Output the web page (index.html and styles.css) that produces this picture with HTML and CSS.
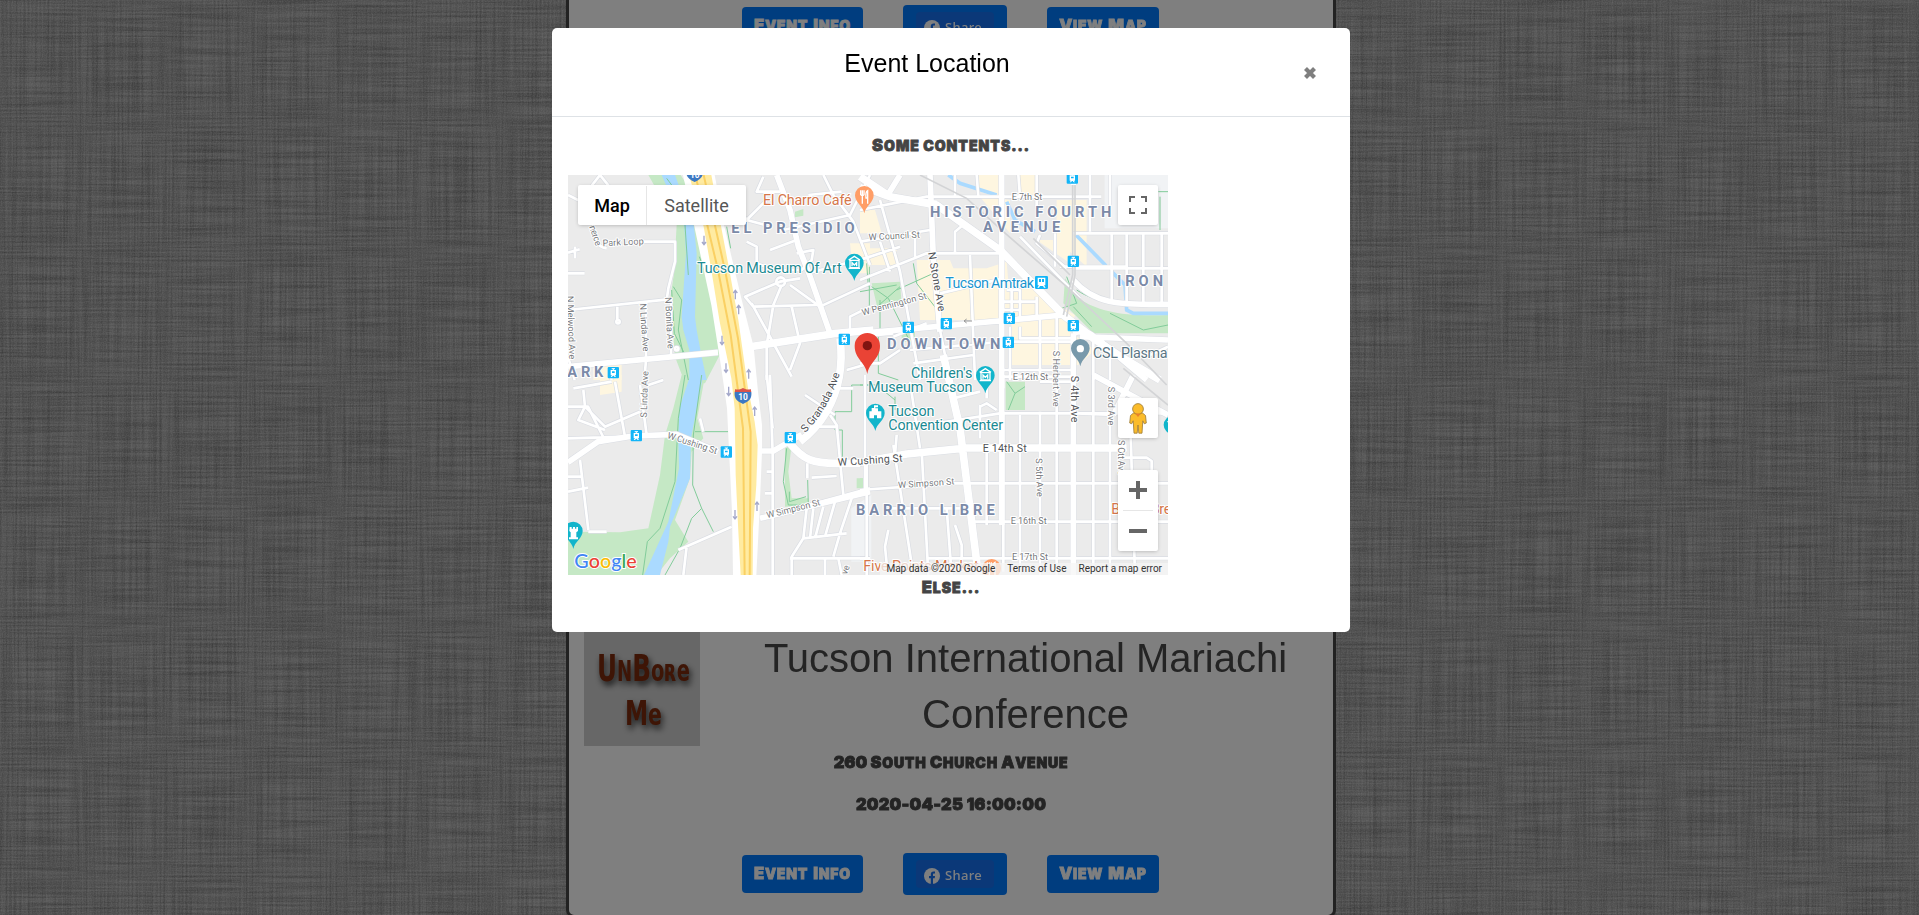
FILE: index.html
```html
<!DOCTYPE html>
<html lang="en">
<head>
<meta charset="utf-8">
<title>Event Location</title>
<link rel="stylesheet" href="styles.css">
</head>
<body>
<svg class="linen" aria-hidden="true">
  <defs>
    <filter id="weft" x="0" y="0" width="100%" height="100%"><feTurbulence type="fractalNoise" baseFrequency="0.012 0.5" numOctaves="2" seed="4"/><feColorMatrix values="0 0 0 0 0  0 0 0 0 0  0 0 0 0 0  .42 0 0 0 -.12"/></filter>
    <filter id="warp" x="0" y="0" width="100%" height="100%"><feTurbulence type="fractalNoise" baseFrequency="0.5 0.008" numOctaves="2" seed="9"/><feColorMatrix values="0 0 0 0 0  0 0 0 0 0  0 0 0 0 0  .38 0 0 0 -.12"/></filter>
    <filter id="grain" x="0" y="0" width="100%" height="100%"><feTurbulence type="fractalNoise" baseFrequency="0.8" numOctaves="1" seed="2"/><feColorMatrix values="0 0 0 0 1  0 0 0 0 1  0 0 0 0 1  .6 0 0 0 -.22"/></filter>
  </defs>
  <rect width="100%" height="100%" filter="url(#weft)"/>
  <rect width="100%" height="100%" filter="url(#warp)"/>
  <rect width="100%" height="100%" filter="url(#grain)"/>
</svg>

<main class="page">
  <section class="card card-first">
    <div class="actions">
      <a class="btn"><span class="sc">Event</span> <span class="sc">Info</span></a>
      <a class="btn btn-share"><span class="fb"><svg viewBox="0 0 16 16"><circle cx="8" cy="8" r="8"/><path d="M6.8 16v-5.8H5V8h1.8V6.300C6.800 4.400 7.900 3.500 9.500 3.500l1.500.1v1.900h-.9c-.9 0-1.100.5-1.100 1.100V8h2l-.3 2.200H9V16z"/></svg>Share</span></a>
      <a class="btn"><span class="sc">View</span> <span class="sc">Map</span></a>
    </div>
  </section>
  <section class="card">
    <div class="head">
      <svg class="thumb" viewBox="0 0 116 116" role="img">
        <rect width="116" height="116"/>
        <g class="thumb-text"><text x="13" y="51" textLength="93" lengthAdjust="spacingAndGlyphs"><tspan font-size="38">U</tspan><tspan font-size="28">N</tspan><tspan font-size="38">B</tspan>oʀe</text>
        <text x="41" y="95" textLength="37" lengthAdjust="spacingAndGlyphs"><tspan font-size="34">M</tspan>e</text></g>
      </svg>
      <h1>Tucson International Mariachi Conference</h1>
    </div>
    <p class="line address">260 <span class="sc">South</span> <span class="sc">Church</span> <span class="sc">Avenue</span></p>
    <p class="line date">2020-04-25 16:00:00</p>
    <div class="actions">
      <a class="btn"><span class="sc">Event</span> <span class="sc">Info</span></a>
      <a class="btn btn-share"><span class="fb"><svg viewBox="0 0 16 16"><circle cx="8" cy="8" r="8"/><path d="M6.8 16v-5.8H5V8h1.8V6.300C6.800 4.400 7.900 3.500 9.500 3.500l1.500.1v1.900h-.9c-.9 0-1.100.5-1.100 1.100V8h2l-.3 2.200H9V16z"/></svg>Share</span></a>
      <a class="btn"><span class="sc">View</span> <span class="sc">Map</span></a>
    </div>
  </section>
</main>

<div class="backdrop">
<div class="modal">
  <header class="modal-head"><h4>Event Location</h4><button class="close" aria-label="Close"><svg viewBox="0 0 14 12"><path d="M2.500 1.500l9 9M11.500 1.500l-9 9"/></svg></button></header>
  <div class="modal-body">
    <p class="note"><span class="sc">Some</span> <span class="sc low">contents...</span></p>
    <div class="map">
<svg class="tiles" viewBox="0 0 1800 1200">
<defs>
  <g id="minor">
    <g transform="translate(-24 -15)">
      <path d="M24 75l60 30M24 310h50M24 248l35-10M45 230v35M85 60l35-45 40 50M100 165c-5 40 10 65 40 70M250 215h95v60l-20 80-5 35M24 420l300-32M172 410v40M258 395v175l-5 60M333 385v175M610 20l-20 45h70M500 60l60 90 55 15M560 215l30 15v50l55 20h80l30-30 5-30-50 10M930 15l-60 120-200 45M560 150l60-60M745 75l100-10M790 15l30 60 60 80 50 130M710 210l-80 30M745 310l185-50M720 325l-60 10-105 45 25 30 190-5M575 400l60 110 60 110M665 345l-25 60-20 120v105M690 345l90 65 150-70M695 410l25 110-30 80M930 410l-60 30v45M860 600l70-20M150 600l5 30M24 560l20 70"/>
      <circle cx="662" cy="335" r="13"/><circle cx="174" cy="455" r="5"/><circle cx="350" cy="536" r="5"/>
    </g>
    <g transform="translate(876 -15)">
      <path d="M0 120l200-40h524M0 215l210-35M0 330l200-80h220M0 270l120-40M60 215l30 90M60 90l60 215 60 325M165 180v80M285 80V15M350 15l5 65M475 15l5 65M530 15v100M690 15v170M750 15v90M285 250v-65l30-25M330 255l15 375M480 200l180 185M585 190v100M640 190h284M640 295h284M600 290h200M755 190v210M800 190v210M850 190v210M905 190v210M540 195l-10 25 90 75M240 370l190-45M440 360h40v90M455 355v90M530 380v60M430 395h100M430 420h50M450 470v160M480 470v35h160M540 450v90M590 440v100M430 515h220M150 540l280-25M240 480l30 150M100 500l100-40M0 500l100-10M430 600h210M540 540v90M590 540v90M700 515v115M750 560v70M860 560l64-30M160 580l180-25M0 580h60l60-40"/>
    </g>
    <g transform="translate(-24 600)">
      <path d="M40 40l115-20M24 95h60l50 100M75 95l-20 40 80 30M70 45l5 50 60 60 105-45M24 190l180-5M24 305h45M24 350l60-12M60 255l25 210M85 470h55M24 260l90-60M265 30l45-15M240 30l20 150M165 20l30 165M620 290h20M615 355h25M755 308l75-5M742 265v45M630 0l8 235v365M620 0l18 160M840 40h40M810 120l20 30 20 210M750 155h85M735 60l90 60M380 515l-10 85M740 400l-10 90-35 55v60M760 400l-10 90M790 395l-25 95M825 380l-30 105M880 355l-40 120-20 70M730 490l130-15M690 550h240M795 550v50M835 550l10 50M915 0v350M420 130l10 40M355 525l160-70M600 430l330-90M120 200h15"/>
    </g>
    <g transform="translate(876 600)">
      <path d="M0 345l280-20h644M20 270v330M100 210l20 130 40 260M185 225l20 375M260 400l15 200M110 180l-5 60M180 140l-80 20M150 20l30 200M340 155h80M280 70l80-20M100 165l320-50h500M380 40v30M380 210v240M430 110v480M480 120v480M540 110v490M590 0v600M700 0v600M750 115v485M810 115l15 485M650 115l110 5M90 400h210M340 440h584M200 550h724M285 450l20 60v40M85 465l-10 50 5 50M780 248h80l15 10v40M540 20h100M0 550h20M430 5h210M360 90v100M360 95l20-10 30 20M700 225h100"/>
    </g>
  </g>
  <g id="mid">
    <g transform="translate(-24 -15)"><path d="M650 15l40 105 25 110 32 80 63 180M24 590l450-43"/></g>
    <g transform="translate(876 -15)"><path d="M0 50l80 30 150 20M210 15l10 250 20 220M425 15v640M640 15v30M0 490l450-40 160-15M640 330c60 70 130 75 284 73M640 490c50-20 60 10 220 140M660 500l264 10M120 15l-40 65M640 490v140"/></g>
    <g transform="translate(-24 600)"><path d="M24 262l90-62 105-17 130-5 125 52M570 228h70l85-50M600 430l330-80"/></g>
    <g transform="translate(876 600)"><path d="M640 0v600M425 0v450M760 120l60-120M700 0l224 120"/></g>
  </g>
  <g id="major">
    <g transform="translate(-24 -15)"><path d="M560 532l270-42 110-10"/></g>
    <g transform="translate(876 -15)"><path d="M0 20l90 60 140 25 190 135 190 195M610 435l90 70 90 60 110 65"/></g>
    <g transform="translate(-24 600)"><path d="M840-110c10 80 0 150-40 220-30 50-60 75-80 90M690 205c40 50 70 60 140 60h70"/></g>
    <g transform="translate(876 600)"><path d="M0 262l140-25 180-18h480M250-60l50 220 55 440"/></g>
  </g>
  <g id="pin"><path d="M0 0C-4-22-28-32-28-54A28 28 0 1 1 28-54C28-32 4-22 0 0Z"/></g>
  <g id="tram"><rect x="-17" y="-17" width="34" height="34" rx="3" fill="#12b5f8"/><path d="M-5-12H5M0-12v5" fill="none" stroke="#fff" stroke-width="3"/><path d="M-8-8H8V8L4 8 8 13H4L1 9H-1L-4 13H-8L-4 8H-8zM-4-4v5h8v-5z" fill="#fff" fill-rule="evenodd"/></g>
  <g id="arrow"><path d="M0-13V13M-6 6L0 14 6 6" fill="none" stroke="#a4a8ca" stroke-width="4"/></g>
  <path id="granada" d="M712 774Q793 690 822 570"/>
</defs>
<rect width="1800" height="1200" fill="#ebebeb"/>
<path d="M1610 0h190v160h-190zM850 1000l60-40v200h-60z" fill="#f1f3f5"/>
<g fill="#fef6e0">
  <path transform="translate(876 -15)" d="M350 15h80v70l-70-20zM475 15h50v60h-50zM590 90h90v200l-90-80zM0 120h45l20 70H0zM0 235h110v50H0zM170 270h100l10 25h100l60-20 5 60h80l20 40 100 60-15 50 75 55-50 45h-200V450H180zM530 210h100v70zM360 80l90 10v100z"/>
  <path transform="translate(-24 -15)" d="M870 220h60v90h-50zM100 580h85v50h-85z"/>
  <path transform="translate(-24 600)" d="M120 0h65v50l-65 10z"/>
</g>
<g fill="#c5e8c5">
  <path transform="translate(-24 -15)" d="M265 15L350 165 342 310 330 390 345 560 375 640 435 640 482 550 442 330 415 200 422 110 362 15ZM705 125l25-8v20l-25 5z"/>
  <path transform="translate(-24 600)" d="M365 0L340 100 315 180 300 300 265 460 180 472 24 470V600H290L330 550 385 500 345 435 390 310 395 230 430 190 412 130 430 30 435 0ZM675 220l20-10-10 80 10 80h50v20l-70 5zM890 310h30v30h-30z"/>
  <path transform="translate(876 -15)" d="M35 340l85-5 5 70-70 20zM615 325l40 60c60 40 130 55 269 50v55H700l-90-90zM125 490l40-10v35h-40z"/>
  <path transform="translate(876 600)" d="M437 20h58v85h-58zM0 310h15v25H0z"/>
</g>
<g fill="#aadaff">
  <path transform="translate(-24 -15)" d="M305 15L373 170 378 250 365 440 370 480 388 540 388 630H440L425 560 410 480 405 440 410 250 402 170 345 15Z"/>
  <path transform="translate(-24 600)" d="M388 10L358 100 355 190 357 280 325 440 252 600H300L325 500 330 455 390 310 393 190 410 100 428 10Z"/>
</g>
<g fill="none" stroke="#aadaff" stroke-width="11"><path transform="translate(876 -15)" d="M265 15l35 25 110 35M440 95l25 55 60 35M648 195l90 92M755 305l40 40 5 75 20 10h104"/></g>
<g fill="none" stroke="#82cc9a" stroke-width="3">
  <path transform="translate(-24 -15)" d="M320 25l45 60 10 80 10 150M340 350l25 40-10 90 30 150M418 260l45 120M500 170l12 65M335 360l8 130 30 60M928 290v120"/>
  <path transform="translate(-24 600)" d="M375 0L355 130 345 320 300 460 262 500 248 600M425 0L400 180 398 330 425 400 460 470M425 400l-30 30-35 90-45 80M405 170h100M680 220l-10 100 15 70h60l-2-75M688 350v30l50-15M930 30h-55v80h-50v55h22v80"/>
  <path transform="translate(876 -15)" d="M20 280l5 70M35 350l50 35 60 120M0 365l110-20M40 420l80-70M60 390v90M160 280l10 60 70 90M110 360l110-50M620 320l30 80-60 20M640 410l55 60M650 360c60 40 130 45 270 40M750 430l100 50 74-15M895 65h29M900 80v100M55 500v110l60 20"/>
  <path transform="translate(876 600)" d="M0 30h50l55 45M105 65v40M440 20l25 35-20 50M465 55l30-20"/>
</g>
<use href="#minor" class="case w1"/><use href="#mid" class="case w2"/><use href="#major" class="case w3"/>
<use href="#minor" class="road w1"/><use href="#mid" class="road w2"/><use href="#major" class="road w3"/>
<g fill="none" stroke="#d3d4d6" stroke-width="5"><path transform="translate(876 -15)" d="M180 15l140 70 110 100 190 165 180 170 120 125M520 205l110 110M638 45v270l-28 120M645 45v270l-25 125"/><path transform="translate(876 600)" d="M790-20l134 110"/></g>
<path fill="#fff" d="M345 0H440L468 150 520 370 557 515 570 650 582 750 582 830 575 1000 565 1200H495L492 1010 477 700 460 580 430 390 378 150Z"/>
<path d="M363 0H430L484 285 511 435 540 640 560 740 569 810 565 930 555 1060 554 1200H518L510 1050 503 900 500 700 490 610 455 440 430 285 407 155Z" fill="#ffeba1"/>
<path d="M382 0L450 285 488 480 525 760 530 1200M407 0L472 290 510 490 548 770 545 1200" fill="none" stroke="#fad063" stroke-width="6"/>
<use href="#arrow" x="408" y="195"/><use href="#arrow" x="462" y="495"/><use href="#arrow" x="474" y="578"/><use href="#arrow" x="482" y="648"/><use href="#arrow" x="501" y="1018"/>
<g transform="rotate(180)"><use href="#arrow" x="-502" y="-360"/><use href="#arrow" x="-512" y="-405"/><use href="#arrow" x="-542" y="-598"/><use href="#arrow" x="-560" y="-710"/><use href="#arrow" x="-567" y="-995"/></g>
<path d="M1212 438h-24M1196 432l-8 6 8 6" stroke="#999" stroke-width="3" fill="none"/>

<g class="st">
  <text transform="translate(64 155) rotate(72)" textLength="62">nerce</text>
  <text transform="translate(104 214) rotate(-3)" textLength="124">Park Loop</text>
  <text transform="translate(-3 363) rotate(88)" textLength="190">N Melwood Ave</text>
  <text transform="translate(215 386) rotate(86)" textLength="144">N Linda Ave</text>
  <text transform="translate(291 367) rotate(87)" textLength="155">N Bonita Ave</text>
  <text transform="translate(236 728) rotate(-88)" textLength="140">S Linda Ave</text>
  <text transform="translate(296 789) rotate(18)" textLength="156">W Cushing St</text>
  <text transform="translate(598 1030) rotate(-14)" textLength="165">W Simpson St</text>
  <text transform="translate(902 196) rotate(-3)" textLength="154">W Council St</text>
  <text transform="translate(884 422) rotate(-15)" textLength="200">W Pennington St</text>
  <text transform="translate(991 940) rotate(-4)" textLength="169">W Simpson St</text>
  <text x="1331" y="75" textLength="92">E 7th St</text>
  <text x="1334" y="616" textLength="107">E 12th St</text>
  <text x="1328" y="1046" textLength="108">E 16th St</text>
  <text x="1332" y="1154" textLength="108">E 17th St</text>
  <text transform="translate(1455 527) rotate(90)" textLength="168">S Herbert Ave</text>
  <text transform="translate(1619 635) rotate(90)" textLength="116">S 3rd Ave</text>
  <text transform="translate(1403 850) rotate(88)" textLength="116">S 5th Ave</text>
  <text transform="translate(1651 795) rotate(90)" textLength="105">S Ott Ave</text>
  <text transform="translate(836 1200) rotate(-70)">ve</text>
</g>
<g class="st dark">
  <text transform="translate(1080 233) rotate(80)" textLength="180">N Stone Ave</text>
  <text><textPath href="#granada">S Granada Ave</textPath></text>
  <text transform="translate(810 873) rotate(-4)" textLength="195">W Cushing St</text>
  <text x="1244" y="832" textLength="132">E 14th St</text>
  <text transform="translate(1509 602) rotate(90)" textLength="140">S 4th Ave</text>
</g>
<g class="area">
  <text x="490" y="175" textLength="370">EL PRESIDIO</text>
  <text x="-2" y="606" textLength="108">ARK</text>
  <text x="1086" y="127" textLength="544">HISTORIC FOURTH</text>
  <text x="1245" y="171" textLength="232">AVENUE</text>
  <text x="1647" y="333" textLength="138">IRON</text>
  <text x="957" y="522" textLength="340">DOWNTOWN</text>
  <text x="864" y="1020" textLength="416">BARRIO LIBRE</text>
</g>
<g class="poi">
  <text x="387" y="294" textLength="434">Tucson Museum Of Art</text>
  <text x="1029" y="608" textLength="184">Children's</text>
  <text x="900" y="651" textLength="313">Museum Tucson</text>
  <text x="961" y="724" textLength="138">Tucson</text>
  <text x="961" y="765" textLength="344">Convention Center</text>
  <text class="amtrak" x="1132" y="339" textLength="266">Tucson Amtrak</text>
  <text class="gray" x="1575" y="550" textLength="224">CSL Plasma</text>
  <text class="food" x="585" y="90" textLength="266">El Charro Café</text>
  <text class="food" x="1630" y="1017" textLength="180">Barrio Bre</text>
  <text class="food" x="886" y="1189" textLength="346">Five Points Market</text>
</g>
<g fill="#12b5cb"><use href="#pin" x="859" y="318"/><use href="#pin" x="1252" y="655"/><use href="#pin" x="922" y="768"/><use href="#pin" x="16" y="1122"/><circle cx="1814" cy="750" r="27"/></g>
<use href="#pin" x="1537" y="574" fill="#7899ab"/><circle cx="1537" cy="521" r="11" fill="#fff"/>
<g fill="#ff9e67"><use href="#pin" x="889" y="115"/><circle cx="1271" cy="1180" r="28"/></g>
<g fill="none" stroke="#fff" stroke-width="4"><path id="mus" d="M846 278v-22h27v22zM842 255l17-11 17 11M852 274v-11l7 7 7-7v11M842 280h34"/><use href="#mus" x="393" y="337"/><path d="M883 46v40M878 46v13q5 6 10 0V46M899 86V47q-7 4-5 22h5"/><path d="M1264 1162v40M1258 1162v13q6 6 12 0v-13M1281 1200v-38q-8 4-5 22h5"/><path d="M1798 740h12v20"/></g>
<path d="M904 730v-21h7v-10h7v-8h12v6h-8v3h8v9h10v21h-13v-9h-9v9zM5 1056h6v5h4v-5h6v5h4v-5h5v12l-5 4v15h5v6H3v-6h5v-15l-4-4z" fill="#fff"/>
<use href="#tram" x="829" y="493"/><use href="#tram" x="136" y="593"/><use href="#tram" x="205" y="782"/><use href="#tram" x="475" y="831"/><use href="#tram" x="667" y="788"/><use href="#tram" x="1513" y="9"/><use href="#tram" x="1516" y="259"/><use href="#tram" x="1516" y="452"/><use href="#tram" x="1324" y="430"/><use href="#tram" x="1135" y="446"/><use href="#tram" x="1021" y="457"/><use href="#tram" x="1321" y="502"/>
<rect x="1401" y="303" width="39" height="39" rx="4" fill="#12b5f8"/><path d="M1409 308h23v23h-4l5 7h-5l-3-5h-9l-3 5h-5l5-7h-4zM1413 312v9h6v-9zM1422 312v9h6v-9z" fill="#fff" fill-rule="evenodd"/>
<g id="shield"><path d="M502 642c7 3 12 2 23-3 11 5 16 6 23 3l2 9h-50z" fill="#d9534b"/><path d="M500 651h50c2 18-5 27-25 36-20-9-27-18-25-36z" fill="#3c78c3"/><text x="525" y="675" class="num">10</text></g>
<use href="#shield" x="-145" y="-666"/>
<path d="M898 597C893 561 860 553 860 512A38 38 0 1 1 936 512C936 553 903 561 898 597Z" fill="#ea4335"/><circle cx="898" cy="512" r="14" fill="#811411"/>
<rect x="936" y="1164" width="864" height="36" fill="#f5f5f5" fill-opacity=".75"/>
<text class="google" x="19" y="1178" textLength="187" lengthAdjust="spacingAndGlyphs"><tspan fill="#4285f4">G</tspan><tspan fill="#ea4335">o</tspan><tspan fill="#fbbc04">o</tspan><tspan fill="#4285f4">g</tspan><tspan fill="#34a853">l</tspan><tspan fill="#ea4335">e</tspan></text>
</svg>
      <div class="ctl types"><b>Map</b><span>Satellite</span></div>
      <div class="ctl full"><svg viewBox="0 0 18 18"><path d="M1 6V1H6M12 1h5V6M17 12v5H12M6 17H1V12"/></svg></div>
      <div class="ctl man"><svg viewBox="0 0 18 31"><g fill="#fbbc2b" stroke="#9b7a36" stroke-width=".8"><path d="M4.500 10h9l3 2.500.8 7.500-2 .8-1.500-3-.8 12.400H9.800L9 22l-.8 8.200H5l-.8-12.400-1.500 3-2-.8.800-7.500z"/><circle cx="9" cy="6" r="5.400"/></g><path d="M6 10.500h6L9 14z" fill="#e8832a"/></svg></div>
      <div class="ctl zoom"><svg viewBox="0 0 18 18"><path d="M9 0v18M0 9h18"/></svg><i></i><svg viewBox="0 0 18 18"><path d="M0 9h18"/></svg></div>
      <div class="credits"><span>Map data ©2020 Google</span><span>Terms of Use</span><span>Report a map error</span></div>
    </div>
    <p class="note else"><span class="sc">Else...</span></p>
  </div>
</div>
</div>
</body>
</html>
```
FILE: styles.css
```css
* { box-sizing: border-box; }
body { margin: 0; height: 915px; overflow: hidden; background: #b9b9b9; font-family: "Liberation Sans", Arial, sans-serif; color: #484848; }
h1, h4, p { margin: 0; font-weight: 400; }

.linen { position: fixed; inset: 0; width: 100%; height: 100%; }
.page { position: relative; width: 770px; height: 918px; margin-left: 566px; display: flex; flex-direction: column; justify-content: space-between; }
.card { border: 3px solid #444; border-radius: 8px; background: #fff; padding: 10px 0 20px 15px; }
.card-first { height: 68px; border-top: 0; border-radius: 0 0 8px 8px; padding: 5px 0 0 15px; }
.head { display: flex; gap: 18px; height: 111px; }
.thumb { width: 116px; height: 116px; flex: none; }
.thumb rect { fill: #cfcfcf; }
.thumb-text { font: 900 30px "DejaVu Sans Condensed", "DejaVu Sans", sans-serif; fill: #7d2a0c; filter: drop-shadow(2px 4px 3px #333); }
h1 { flex: 1; font-size: 40px; line-height: 56px; text-align: center; padding: 0 40px; }
.line, .note, .btn { font-family: Inter, sans-serif; font-weight: 900; font-size: 16.5px; white-space: pre; -webkit-text-stroke: .8px currentColor; }
.sc { display: inline-block; text-transform: uppercase; font-size: 14px; letter-spacing: .8px; }
.sc::first-letter { font-size: 16.500px; }
.note .sc { letter-spacing: 1px; }
.note .low::first-letter { font-size: 14px; }
.line { height: 42px; line-height: 42px; text-align: center; margin-left: -15px; }
.date { letter-spacing: .2px; }
.actions { display: flex; justify-content: center; align-items: center; gap: 40px; height: 42px; margin: 0 0 0 -16px; }
.line + .actions { margin-top: 28px; }
.btn { display: flex; justify-content: center; align-items: baseline; width: 121px; height: 38px; line-height: 37px; border-radius: 4px; background: #007bff; color: #fff; gap: 5px; }
.btn:last-child { width: 112px; }
.btn-share { width: 104px; height: 42px; align-items: center; }
.fb { display: flex; align-items: center; gap: 5px; width: 78px; height: 28px; padding: 1px 0 0 8px; border-radius: 4px; background: #1670f0; font: 500 13px "Noto Sans", sans-serif; letter-spacing: .3px; -webkit-text-stroke: 0; }
.fb svg { width: 16px; height: 16px; margin-top: 2px; fill: #fff; }
.fb path { fill: #1670f0; }

.backdrop { position: fixed; inset: 0; background: rgba(0, 0, 0, .5); padding: 28px 0 0 552px; }
.modal { width: 798px; height: 604px; background: #fff; border-radius: 5px; padding: 0 1px; }
.modal-head { display: flex; justify-content: center; height: 89px; margin: 0 -1px; padding-top: 21px; border-bottom: 1px solid #dee2e6; position: relative; }
h4 { font-size: 25px; line-height: 28px; color: #000; margin-right: 48px; }
.close { position: absolute; right: 33px; top: 39px; width: 14px; height: 12px; padding: 0; border: 0; background: none; }
.close svg { display: block; width: 14px; height: 12px; fill: none; stroke: #7f7f7f; stroke-width: 4.2; }
.modal-body { padding: 15px; }
.note { height: 43px; line-height: 27px; text-align: center; color: #444; }
.else { height: 24px; line-height: 24px; }

.map { position: relative; width: 600px; height: 400px; overflow: hidden; font-family: Roboto, sans-serif; }
.tiles { display: block; width: 600px; height: 400px; font-family: Roboto, sans-serif; }
.case, .road { fill: none; stroke-linejoin: round; }
.case { stroke: #dadde3; }
.road { stroke: #fff; }
.road.w1 { stroke-width: 8px; }
.case.w1 { stroke-width: 12px; }
.road.w2 { stroke-width: 17px; }
.case.w2 { stroke-width: 20px; }
.road.w3 { stroke-width: 23px; }
.case.w3 { stroke-width: 25px; }
.st text, .area text, .poi text { paint-order: stroke; stroke: #fff; stroke-width: 6px; stroke-linejoin: round; }
.st { font-size: 27.5px; fill: #77797d; }
.dark { font-size: 32px; fill: #505357; }
.area { font-size: 44px; font-weight: 700; fill: #7b8aa8; }
.poi { font-size: 43px; fill: #1b8a92; }
.amtrak { fill: #1a95cf; }
.gray { fill: #5b7684; }
.food { fill: #d5764a; }
.num { font-size: 25px; font-weight: 700; fill: #fff; text-anchor: middle; }
.google { font: 500 60px Lato, sans-serif; paint-order: stroke; stroke: #fff; stroke-width: 6px; }

.ctl { position: absolute; display: flex; align-items: center; justify-content: center; background: #fff; border-radius: 2px; box-shadow: 0 1px 4px -1px rgba(0, 0, 0, .3); }
.types { left: 10px; top: 10px; width: 168px; height: 40px; font-size: 18px; line-height: 39px; color: #565656; }
.types b { width: 69px; text-align: center; font-weight: 500; color: #000; border-right: 1px solid #e6e6e6; }
.types span { flex: 1; text-align: center; }
.ctl svg { width: 18px; height: 18px; fill: none; stroke: #666; }
.full { right: 10px; top: 10px; width: 40px; height: 40px; }
.full svg { stroke-width: 2; }
.man { right: 10px; top: 223px; width: 40px; height: 40px; }
.man svg { width: 18px; height: 31px; stroke: none; }
.zoom { right: 10px; top: 295px; width: 40px; height: 81px; flex-direction: column; gap: 11px; }
.zoom svg { stroke-width: 4; }
.zoom i { width: 30px; height: 1px; background: #e6e6e6; }
.credits { position: absolute; right: 6px; bottom: 0; display: flex; gap: 12px; line-height: 13px; font-size: 10px; color: #333; white-space: nowrap; }
```
